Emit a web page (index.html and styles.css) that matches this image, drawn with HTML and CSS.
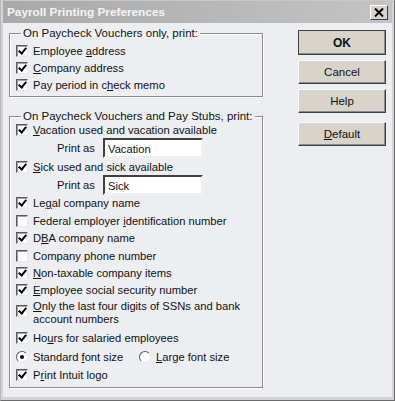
FILE: index.html
```html
<!DOCTYPE html>
<html>
<head>
  <link rel="stylesheet" href="styles.css">
</head>
<body>
  <div class="window">
    <div class="title-bar">
      <span class="title">Payroll Printing Preferences</span>
      <span class="close-btn">
        <svg width="10" height="9" viewBox="0 0 10 9"><path d="M1 0.5 L9 8.5 M9 0.5 L1 8.5" stroke="#000" stroke-width="2"/></svg>
      </span>
    </div>
    <div class="content">
      <div class="groups">
        <fieldset class="group group-one">
          <legend>On Paycheck Vouchers only, print:</legend>
          <div class="row"><span class="check on"></span><span>Employee <u>a</u>ddress</span></div>
          <div class="row"><span class="check on"></span><span><u>C</u>ompany address</span></div>
          <div class="row"><span class="check on"></span><span>Pay period in c<u>h</u>eck memo</span></div>
        </fieldset>
        <fieldset class="group group-two">
          <legend>On Paycheck Vouchers and Pay Stubs, print:</legend>
          <div class="row first"><span class="check on"></span><span><u>V</u>acation used and vacation available</span></div>
          <div class="row print-as"><span class="print-label">Print as</span><span class="text-box">Vacation</span></div>
          <div class="row"><span class="check on"></span><span><u>S</u>ick used and sick available</span></div>
          <div class="row print-as"><span class="print-label">Print as</span><span class="text-box">Sick</span></div>
          <div class="row"><span class="check on"></span><span>Le<u>g</u>al company name</span></div>
          <div class="row"><span class="check"></span><span>Federal employer <u>i</u>dentification number</span></div>
          <div class="row"><span class="check on"></span><span>D<u>B</u>A company name</span></div>
          <div class="row"><span class="check"></span><span>Company phone number</span></div>
          <div class="row"><span class="check on"></span><span><u>N</u>on-taxable company items</span></div>
          <div class="row"><span class="check on"></span><span><u>E</u>mployee social security number</span></div>
          <div class="row tall"><span class="check on"></span><span class="wrap-text"><u>O</u>nly the last four digits of SSNs and bank<br>account numbers</span></div>
          <div class="row"><span class="check on"></span><span>Ho<u>u</u>rs for salaried employees</span></div>
          <div class="row radios">
            <span class="radio-item"><span class="radio on"></span><span>Standard <u>f</u>ont size</span></span>
            <span class="radio-item"><span class="radio"></span><span><u>L</u>arge font size</span></span>
          </div>
          <div class="row"><span class="check on"></span><span>P<u>r</u>int Intuit logo</span></div>
        </fieldset>
      </div>
      <div class="buttons">
        <div class="btn default-btn">OK</div>
        <div class="btn">Cancel</div>
        <div class="btn">Help</div>
        <div class="btn spaced"><u>D</u>efault</div>
      </div>
    </div>
  </div>
</body>
</html>
```

FILE: styles.css
```css
html, body {
  margin: 0;
  padding: 0;
  background-color: #dcdcdc;
}

body {
  font-family: "Liberation Sans", Arial, sans-serif;
  font-size: 11.2px;
  color: #111;
}

.window {
  width: 395px;
  height: 401px;
  box-sizing: border-box;
  border: 1px solid #6b6b6b;
  border-top-color: #c8c8c8;
  border-left-color: #b8b8b8;
  padding: 0 2px 3px 2px;
  background-color: #d4d4d4;
  display: flex;
  flex-direction: column;
}

.title-bar {
  height: 22px;
  flex-shrink: 0;
  display: flex;
  align-items: center;
  justify-content: space-between;
  padding: 0 4px 0 4px;
  background: linear-gradient(to right, #a9a9a9, #b9b9b9 60%, #c4c4c4);
}

.title {
  color: #f4f4f4;
  font-weight: bold;
  font-size: 11.8px;
}

.close-btn {
  width: 18px;
  height: 15px;
  box-sizing: border-box;
  background-color: #d8d4cc;
  border: 1px solid;
  border-color: #fff #404040 #404040 #fff;
  display: flex;
  align-items: center;
  justify-content: center;
}

.content {
  flex: 1;
  display: flex;
  background-color: #eceef2;
  padding: 3px 0 0 6px;
}

.groups {
  width: 254px;
  display: flex;
  flex-direction: column;
}

.group {
  margin: 0;
  padding: 2px 0 0 6px;
  border: 1px solid #8a8a8a;
  box-shadow: 1px 1px 0 #fff, inset 1px 1px 0 #fff;
}

.group legend {
  padding: 0 2px;
  margin-left: 5px;
  line-height: 14px;
  white-space: nowrap;
  font-size: 11.5px;
}

.group-one {
  height: 71px;
  box-sizing: border-box;
}

.group-two {
  margin-top: 12px;
  height: 279px;
  box-sizing: border-box;
  padding-top: 0;
}

.row {
  height: 17.4px;
  display: flex;
  align-items: center;
  gap: 5px;
  white-space: nowrap;
}

.first {
  margin-top: -2px;
}

.print-as {
  height: 19.5px;
  padding-left: 41px;
  gap: 0;
}

.print-label {
  width: 46px;
}

.text-box {
  width: 100px;
  height: 20px;
  box-sizing: border-box;
  background-color: #fff;
  border: 2px solid;
  border-color: #404040 #f0f0f0 #f0f0f0 #404040;
  padding: 2px 3px;
  line-height: 14px;
}

.tall {
  height: 30px;
  align-items: flex-start;
  padding-top: 1px;
  box-sizing: border-box;
}

.tall .check {
  margin-top: 5px;
}

.wrap-text {
  line-height: 13px;
}

.radios {
  height: 20px;
  gap: 0;
}

.radio-item {
  display: flex;
  align-items: center;
  gap: 5px;
  width: 123px;
}

.check {
  width: 12px;
  height: 12px;
  flex-shrink: 0;
  box-sizing: border-box;
  background-color: #fff;
  border: 1px solid;
  border-color: #5a5a5a #e8e8e8 #e8e8e8 #5a5a5a;
  box-shadow: inset 1px 1px 0 #a0a0a0;
  position: relative;
}

.check.on::after {
  content: "";
  position: absolute;
  left: 3px;
  top: 0px;
  width: 3px;
  height: 6px;
  border: solid #000;
  border-width: 0 2px 2px 0;
  transform: rotate(40deg);
}

.radio {
  width: 12px;
  height: 12px;
  flex-shrink: 0;
  box-sizing: border-box;
  border-radius: 50%;
  background-color: #fff;
  border: 1px solid;
  border-color: #5a5a5a #e8e8e8 #e8e8e8 #5a5a5a;
  display: flex;
  align-items: center;
  justify-content: center;
}

.radio.on::after {
  content: "";
  width: 4px;
  height: 4px;
  border-radius: 50%;
  background-color: #000;
}

.buttons {
  margin-left: 35px;
  padding-top: 4px;
  display: flex;
  flex-direction: column;
  gap: 5px;
}

.btn {
  width: 88px;
  height: 24px;
  box-sizing: border-box;
  background-color: #d8d4cc;
  border: 1px solid;
  border-color: #fafafa #404040 #404040 #fafafa;
  box-shadow: inset -1px -1px 0 #8a8a8a;
  display: flex;
  align-items: center;
  justify-content: center;
  font-size: 11.5px;
}

.default-btn {
  font-weight: bold;
  font-size: 12px;
  border-color: #404040;
  height: 25px;
}

.spaced {
  margin-top: 4px;
}
```
